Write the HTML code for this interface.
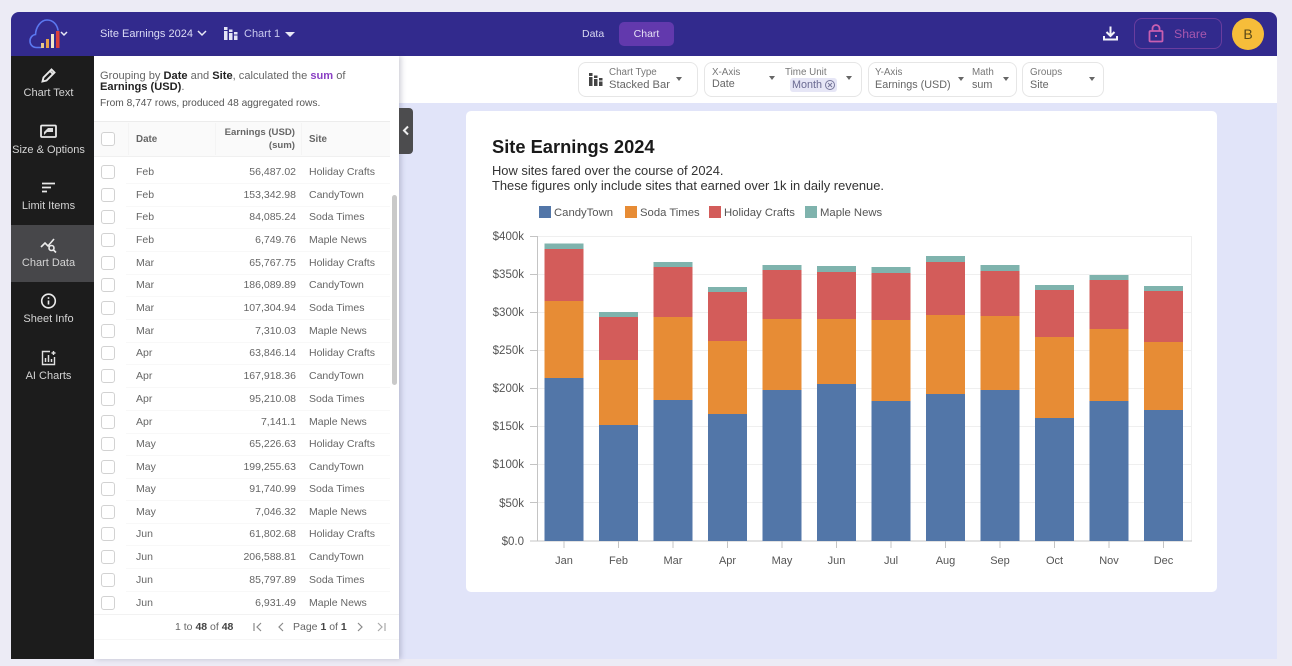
<!DOCTYPE html>
<html><head><meta charset="utf-8">
<style>
*{box-sizing:border-box}
html{background:#ecebf5}
html,body{margin:0;padding:0;width:1292px;height:666px;overflow:hidden;font-family:"Liberation Sans",sans-serif}
body{position:relative;filter:blur(.35px)}
.a{position:absolute;white-space:nowrap}
#win{position:absolute;left:11px;top:12px;width:1266px;height:647px;background:#e1e4f9;border-radius:8px 8px 0 0;overflow:hidden}
#top{position:absolute;left:11px;top:12px;width:1266px;height:44px;background:#322a8d;border-radius:8px 8px 0 0}
#tool{position:absolute;left:399px;top:56px;width:878px;height:47px;background:#fff}
#side{position:absolute;left:11px;top:56px;width:83px;height:603px;background:#1c1c1c}
#panel{position:absolute;left:94px;top:56px;width:305px;height:603px;background:#fff;box-shadow:2px 0 5px rgba(60,60,90,.25)}
.nav{position:absolute;left:11px;width:75px;text-align:center;color:#d4d4d4;font-size:11px}
.nav svg{position:absolute;left:29px;top:0}
.nl{position:absolute;left:-6px;right:-6px}
.pill{position:absolute;top:62px;height:35px;background:#fff;border:1px solid #e6e6e6;border-radius:8px}
.lb{position:absolute;font-size:9.8px;color:#777;white-space:nowrap}
.vl{position:absolute;font-size:10.8px;color:#666;white-space:nowrap}
.car{position:absolute;width:0;height:0;border-left:3.5px solid transparent;border-right:3.5px solid transparent;border-top:4px solid #666}
.r{position:absolute;left:94px;width:296px;height:23px;margin-top:1px;font-size:10.5px;color:#666;line-height:23px}
.r i{position:absolute;left:7px;top:4px;width:14px;height:14px;border:1.3px solid #d2d2d2;border-radius:3px;background:#fff}
.r b{position:absolute;left:42px;font-weight:400}
.r u{position:absolute;right:94px;text-decoration:none}
.r s{position:absolute;left:215px;text-decoration:none}
.r em{position:absolute;left:32px;right:0;bottom:0;border-bottom:1px solid #f8f8f8}
.y{font-size:11.5px;fill:#555;text-anchor:end}
.x{font-size:11px;fill:#555;text-anchor:middle}
</style></head><body>
<div id="win"></div>
<div id="tool"></div>
<div id="top"></div>
<div id="side"></div>

<!-- logo -->
<svg class="a" style="left:26px;top:17px" width="46" height="34" viewBox="0 0 46 34" fill="none">
<path d="M15 30.500H10.500C6.500 30.500 4 27.500 4 24C4 20.500 6.500 17.800 9.500 17.500C9.800 10.500 14.500 3 21 3C27 3 31 7.500 32 13" stroke="#5b78f0" stroke-width="1.600" stroke-linecap="round"/>
<rect x="15" y="26" width="3" height="5" fill="#e8c98a"/><rect x="20" y="22" width="3" height="9" fill="#e8a24a"/><rect x="25" y="17" width="3" height="14" fill="#f0e6c8"/><rect x="30" y="14" width="3.500" height="17" fill="#d9403c"/>
<path d="M35 15l3 3 3-3" stroke="#e8e8f5" stroke-width="1.500"/>
</svg>

<!-- top bar text -->
<div class="a" style="left:100px;top:28px;font-size:11px;color:#dcdcf5">Site Earnings 2024</div>
<svg class="a" style="left:197px;top:30px" width="10" height="7" fill="none"><path d="M1 1l4 4 4-4" stroke="#e8e8f5" stroke-width="1.500"/></svg>
<svg class="a" style="left:223px;top:26px" width="16" height="15" fill="#e4e4f6"><rect x="1" y="1" width="3.500" height="3"/><rect x="1" y="5" width="3.500" height="9"/><rect x="6" y="3.500" width="3.500" height="2.500"/><rect x="6" y="7" width="3.500" height="7"/><rect x="11" y="6" width="3.500" height="2.500"/><rect x="11" y="9.500" width="3.500" height="4.500"/></svg>
<div class="a" style="left:244px;top:28px;font-size:11px;color:#c9c9ee">Chart 1</div>
<div class="car" style="left:285px;top:31.500px;border-left-width:5px;border-right-width:5px;border-top:5px solid #e8e8f5"></div>
<div class="a" style="left:582px;top:28px;font-size:10.500px;color:#d8d8f0">Data</div>
<div class="a" style="left:619px;top:22px;width:55px;height:24px;background:#6239ad;border-radius:5px;color:#e6e0f5;font-size:10.500px;line-height:24px;text-align:center">Chart</div>
<svg class="a" style="left:1102px;top:25px" width="17" height="17" fill="none" stroke="#f2f2fa" stroke-width="2"><path d="M8.500 1.500V10M4.500 7l4 4 4-4"/><path d="M2 11v3.500h13V11"/></svg>
<div class="a" style="left:1134px;top:18px;width:88px;height:31px;border:1px solid #6a3d9e;border-radius:8px"></div>
<svg class="a" style="left:1147px;top:24px" width="18" height="19" fill="none" stroke="#c95fb0" stroke-width="1.800"><rect x="2.500" y="7" width="13" height="10.500" rx="1"/><path d="M5.500 7V4.500a3.500 3.500 0 0 1 7 0V7"/><rect x="8" y="11" width="2" height="2" fill="#c95fb0" stroke="none"/></svg>
<div class="a" style="left:1174px;top:27px;font-size:12.300px;color:#a757ae">Share</div>
<div class="a" style="left:1232px;top:18px;width:32px;height:32px;border-radius:50%;background:#f6bd3a;color:#5a4a18;font-size:14px;line-height:32px;text-align:center">B</div>

<!-- toolbar -->
<div class="pill" style="left:578px;width:120px"></div>
<svg class="a" style="left:588px;top:72px" width="16" height="15" fill="#444"><rect x="1" y="1" width="3.500" height="3"/><rect x="1" y="5" width="3.500" height="9"/><rect x="6" y="3.500" width="3.500" height="2.500"/><rect x="6" y="7" width="3.500" height="7"/><rect x="11" y="6" width="3.500" height="2.500"/><rect x="11" y="9.500" width="3.500" height="4.500"/></svg>
<div class="lb" style="left:609px;top:67px">Chart Type</div>
<div class="vl" style="left:609px;top:79px;font-size:11.200px">Stacked Bar</div>
<div class="car" style="left:676px;top:77px"></div>

<div class="pill" style="left:704px;width:158px"></div>
<div class="lb" style="left:712px;top:67px">X-Axis</div>
<div class="vl" style="left:712px;top:78px">Date</div>
<div class="car" style="left:769px;top:76px"></div>
<div class="lb" style="left:785px;top:67px">Time Unit</div>
<div class="a" style="left:790px;top:78px;width:47px;height:14px;background:#e6e6f6;border-radius:3px"></div>
<div class="vl" style="left:792px;top:78.500px;color:#6a6a92">Month</div>
<svg class="a" style="left:824px;top:79px" width="12" height="12" fill="none" stroke="#77779a"><circle cx="6" cy="6" r="4.500"/><path d="M4 4l4 4M8 4l-4 4"/></svg>
<div class="car" style="left:846px;top:76px"></div>

<div class="pill" style="left:868px;width:149px"></div>
<div class="lb" style="left:875px;top:67px">Y-Axis</div>
<div class="vl" style="left:875px;top:79px">Earnings (USD)</div>
<div class="car" style="left:958px;top:77px"></div>
<div class="lb" style="left:972px;top:67px">Math</div>
<div class="vl" style="left:972px;top:79px">sum</div>
<div class="car" style="left:1003px;top:77px"></div>

<div class="pill" style="left:1022px;width:82px"></div>
<div class="lb" style="left:1030px;top:67px">Groups</div>
<div class="vl" style="left:1030px;top:79px">Site</div>
<div class="car" style="left:1089px;top:77px"></div>

<!-- sidebar -->
<div class="a" style="left:11px;top:225px;width:83px;height:57px;background:#47474a"></div>
<div class="nav" style="top:67px"><svg width="17" height="17" fill="none" stroke="#e8e8e8" stroke-width="1.900"><path d="M2.500 14.500l1-4L11.500 2.500l3 3-8 8z"/><path d="M10 4l3 3"/></svg><div class="nl" style="top:20px">Chart Text</div></div>
<div class="nav" style="top:124px"><svg width="17" height="15" fill="none"><rect x="1" y="1.500" width="15" height="11.500" rx="1" stroke="#e8e8e8" stroke-width="1.800"/><path d="M4 11l3-3h6V4H8L4 8z" fill="#dcdcdc"/></svg><div class="nl" style="top:20px">Size &amp; Options</div></div>
<div class="nav" style="top:181px"><svg width="17" height="15" fill="none" stroke="#e8e8e8" stroke-width="1.700"><path d="M2 2.500h13M2 6.500h9M2 10.500h5"/></svg><div class="nl" style="top:19px">Limit Items</div></div>
<div class="nav" style="top:237px"><svg width="17" height="17" fill="none" stroke="#ececec" stroke-width="1.600"><path d="M1 10l4-4 3 3 6-7"/><circle cx="11.500" cy="11" r="2.500"/><path d="M13.500 13l2.500 2.500"/></svg><div class="nl" style="top:20px">Chart Data</div></div>
<div class="nav" style="top:293px"><svg width="17" height="17" fill="none" stroke="#ececec" stroke-width="1.600"><circle cx="8.500" cy="8" r="6.800"/><path d="M8.500 7.500v4M8.500 4.300v1.600"/></svg><div class="nl" style="top:20px">Sheet Info</div></div>
<div class="nav" style="top:350px"><svg width="17" height="17" fill="none" stroke="#e0e0e0" stroke-width="1.400"><path d="M10 1.500H2.500v13h12V7"/><path d="M5.500 12V8M8.500 12V5M11.500 12V9" stroke-width="1.500"/><path d="M13.500 1v4M11.500 3h4"/></svg><div class="nl" style="top:20px">AI Charts</div></div>

<!-- panel -->
<div id="panel"></div>
<div class="a" style="left:100px;top:70.500px;font-size:11.100px;color:#666;line-height:11px">Grouping by <b style="color:#222">Date</b> and <b style="color:#222">Site</b>, calculated the <b style="color:#8a3fc4">sum</b> of<br><b style="color:#222">Earnings (USD)</b>.</div>
<div class="a" style="left:100px;top:97.500px;font-size:10.200px;color:#555">From 8,747 rows, produced 48 aggregated rows.</div>

<div class="a" style="left:94px;top:121px;width:296px;height:36px;background:#fafafa;border-top:1px solid #ececec;border-bottom:1px solid #f0f0f0"></div>
<div class="a" style="left:128px;top:123px;width:1px;height:32px;background:#f4f4f4"></div>
<div class="a" style="left:215px;top:123px;width:1px;height:32px;background:#f4f4f4"></div>
<div class="a" style="left:301px;top:123px;width:1px;height:32px;background:#f4f4f4"></div>
<div class="a" style="left:101px;top:132px;width:14px;height:14px;border:1.300px solid #d2d2d2;border-radius:3px;background:#fff"></div>
<div class="a" style="left:136px;top:133.500px;font-size:9.800px;font-weight:700;color:#666">Date</div>
<div class="a" style="left:216px;top:127px;width:79px;text-align:right;font-size:9.600px;line-height:12.500px;font-weight:700;color:#666">Earnings (USD)<br>(sum)</div>
<div class="a" style="left:309px;top:133.500px;font-size:9.800px;font-weight:700;color:#666">Site</div>

<div class="r" style="top:160px"><i></i><b>Feb</b><u>56,487.02</u><s>Holiday Crafts</s><em></em></div>
<div class="r" style="top:183px"><i></i><b>Feb</b><u>153,342.98</u><s>CandyTown</s><em></em></div>
<div class="r" style="top:205px"><i></i><b>Feb</b><u>84,085.24</u><s>Soda Times</s><em></em></div>
<div class="r" style="top:228px"><i></i><b>Feb</b><u>6,749.76</u><s>Maple News</s><em></em></div>
<div class="r" style="top:251px"><i></i><b>Mar</b><u>65,767.75</u><s>Holiday Crafts</s><em></em></div>
<div class="r" style="top:273px"><i></i><b>Mar</b><u>186,089.89</u><s>CandyTown</s><em></em></div>
<div class="r" style="top:296px"><i></i><b>Mar</b><u>107,304.94</u><s>Soda Times</s><em></em></div>
<div class="r" style="top:319px"><i></i><b>Mar</b><u>7,310.03</u><s>Maple News</s><em></em></div>
<div class="r" style="top:341px"><i></i><b>Apr</b><u>63,846.14</u><s>Holiday Crafts</s><em></em></div>
<div class="r" style="top:364px"><i></i><b>Apr</b><u>167,918.36</u><s>CandyTown</s><em></em></div>
<div class="r" style="top:387px"><i></i><b>Apr</b><u>95,210.08</u><s>Soda Times</s><em></em></div>
<div class="r" style="top:410px"><i></i><b>Apr</b><u>7,141.1</u><s>Maple News</s><em></em></div>
<div class="r" style="top:432px"><i></i><b>May</b><u>65,226.63</u><s>Holiday Crafts</s><em></em></div>
<div class="r" style="top:455px"><i></i><b>May</b><u>199,255.63</u><s>CandyTown</s><em></em></div>
<div class="r" style="top:477px"><i></i><b>May</b><u>91,740.99</u><s>Soda Times</s><em></em></div>
<div class="r" style="top:500px"><i></i><b>May</b><u>7,046.32</u><s>Maple News</s><em></em></div>
<div class="r" style="top:522px"><i></i><b>Jun</b><u>61,802.68</u><s>Holiday Crafts</s><em></em></div>
<div class="r" style="top:545px"><i></i><b>Jun</b><u>206,588.81</u><s>CandyTown</s><em></em></div>
<div class="r" style="top:568px"><i></i><b>Jun</b><u>85,797.89</u><s>Soda Times</s><em></em></div>
<div class="r" style="top:591px"><i></i><b>Jun</b><u>6,931.49</u><s>Maple News</s></div>

<div class="a" style="left:392px;top:195px;width:5px;height:190px;background:#c9c9c9;border-radius:3px"></div>
<div class="a" style="left:94px;top:614px;width:305px;height:26px;border-top:1px solid #f2f2f2;border-bottom:1px solid #f6f6f6"></div>
<div class="a" style="left:175px;top:621px;font-size:10.500px;color:#666">1 to <b style="color:#444">48</b> of <b style="color:#444">48</b></div>
<div class="a" style="left:293px;top:621px;font-size:10.500px;color:#666">Page <b style="color:#444">1</b> of <b style="color:#444">1</b></div>
<svg class="a" style="left:250px;top:620px" width="140" height="14" fill="none" stroke="#8a8a8a" stroke-width="1.200"><path d="M4 3v8M11 3L7 7l4 4"/><path d="M33 3l-4 4 4 4"/><path d="M108 3l4 4-4 4"/><path d="M128 3l4 4-4 4M135 3v8" stroke="#aaa"/></svg>

<!-- collapse -->
<div class="a" style="left:399px;top:108px;width:14px;height:46px;background:#4c4c4e;border-radius:0 4px 4px 0"></div>
<svg class="a" style="left:402px;top:125px" width="8" height="11" fill="none" stroke="#eee" stroke-width="2"><path d="M6 1.500L2 5.500l4 4"/></svg>

<!-- card -->
<div class="a" style="left:466px;top:111px;width:751px;height:481px;background:#fff;border-radius:5px"></div>
<div class="a" style="left:492px;top:136px;font-size:18.300px;font-weight:700;color:#1a1a1a">Site Earnings 2024</div>
<div class="a" style="left:492px;top:163px;font-size:12.900px;line-height:15px;color:#333">How sites fared over the course of 2024.<br>These figures only include sites that earned over 1k in daily revenue.</div>

<svg class="a" style="left:0;top:0" width="1292" height="666" font-family="Liberation Sans, sans-serif">
<g font-size="11.300" fill="#555">
<rect x="539" y="206" width="12" height="12" fill="#5276a8"/><text x="554" y="216">CandyTown</text>
<rect x="625" y="206" width="12" height="12" fill="#e78c35"/><text x="640" y="216">Soda Times</text>
<rect x="709" y="206" width="12" height="12" fill="#d35c5a"/><text x="724" y="216">Holiday Crafts</text>
<rect x="805" y="206" width="12" height="12" fill="#7fb3ad"/><text x="820" y="216">Maple News</text>
</g>
<g stroke="#efefef" fill="none">
<path d="M537 236.500H1191.500V541"/>
<path d="M537 274.500H1191M537 312.500H1191M537 350.500H1191M537 388.500H1191M537 426.500H1191M537 464.500H1191M537 502.500H1191"/>
</g>
<g stroke="#c4c4c4" fill="none">
<path d="M537.500 236V541.500"/>
<path d="M530 236.500h7M530 274.500h7M530 312.500h7M530 350.500h7M530 388.500h7M530 426.500h7M530 464.500h7M530 502.500h7M530 541h662"/>
<path d="M564 541v7M618.500 541v7M673 541v7M727.500 541v7M782 541v7M836.500 541v7M891 541v7M945.500 541v7M1000 541v7M1054.500 541v7M1109 541v7M1163.500 541v7"/>
</g>
<g class="ylab">
<text class="y" x="524" y="240">$400k</text><text class="y" x="524" y="278">$350k</text><text class="y" x="524" y="316">$300k</text><text class="y" x="524" y="354">$250k</text><text class="y" x="524" y="392">$200k</text><text class="y" x="524" y="430">$150k</text><text class="y" x="524" y="468">$100k</text><text class="y" x="524" y="507">$50k</text><text class="y" x="524" y="545">$0.0</text>
</g>
<g>
<text class="x" x="564" y="564">Jan</text><text class="x" x="618.500" y="564">Feb</text><text class="x" x="673" y="564">Mar</text><text class="x" x="727.500" y="564">Apr</text><text class="x" x="782" y="564">May</text><text class="x" x="836.500" y="564">Jun</text><text class="x" x="891" y="564">Jul</text><text class="x" x="945.500" y="564">Aug</text><text class="x" x="1000" y="564">Sep</text><text class="x" x="1054.500" y="564">Oct</text><text class="x" x="1109" y="564">Nov</text><text class="x" x="1163.500" y="564">Dec</text>
</g>
<g fill="#5276a8">
<rect x="544.500" y="378" width="39" height="163"/><rect x="599" y="425" width="39" height="116"/><rect x="653.500" y="400" width="39" height="141"/><rect x="708" y="414" width="39" height="127"/><rect x="762.500" y="390" width="39" height="151"/><rect x="817" y="384" width="39" height="157"/><rect x="871.500" y="401" width="39" height="140"/><rect x="926" y="394" width="39" height="147"/><rect x="980.500" y="390" width="39" height="151"/><rect x="1035" y="418" width="39" height="123"/><rect x="1089.500" y="401" width="39" height="140"/><rect x="1144" y="410" width="39" height="131"/>
</g>
<g fill="#e78c35">
<rect x="544.500" y="301" width="39" height="77"/><rect x="599" y="360" width="39" height="65"/><rect x="653.500" y="317" width="39" height="83"/><rect x="708" y="341" width="39" height="73"/><rect x="762.500" y="319" width="39" height="71"/><rect x="817" y="319" width="39" height="65"/><rect x="871.500" y="320" width="39" height="81"/><rect x="926" y="315" width="39" height="79"/><rect x="980.500" y="316" width="39" height="74"/><rect x="1035" y="337" width="39" height="81"/><rect x="1089.500" y="329" width="39" height="72"/><rect x="1144" y="342" width="39" height="68"/>
</g>
<g fill="#d35c5a">
<rect x="544.500" y="249" width="39" height="52"/><rect x="599" y="317" width="39" height="43"/><rect x="653.500" y="267" width="39" height="50"/><rect x="708" y="292" width="39" height="49"/><rect x="762.500" y="270" width="39" height="49"/><rect x="817" y="272" width="39" height="47"/><rect x="871.500" y="273" width="39" height="47"/><rect x="926" y="262" width="39" height="53"/><rect x="980.500" y="271" width="39" height="45"/><rect x="1035" y="290" width="39" height="47"/><rect x="1089.500" y="280" width="39" height="49"/><rect x="1144" y="291" width="39" height="51"/>
</g>
<g fill="#7fb3ad">
<rect x="544.500" y="243.500" width="39" height="5.500"/><rect x="599" y="312" width="39" height="5"/><rect x="653.500" y="262" width="39" height="5"/><rect x="708" y="287" width="39" height="5"/><rect x="762.500" y="265" width="39" height="5"/><rect x="817" y="266" width="39" height="6"/><rect x="871.500" y="267" width="39" height="6"/><rect x="926" y="256" width="39" height="6"/><rect x="980.500" y="265" width="39" height="6"/><rect x="1035" y="285" width="39" height="5"/><rect x="1089.500" y="275" width="39" height="5"/><rect x="1144" y="286" width="39" height="5"/>
</g>
</svg>
</body></html>
